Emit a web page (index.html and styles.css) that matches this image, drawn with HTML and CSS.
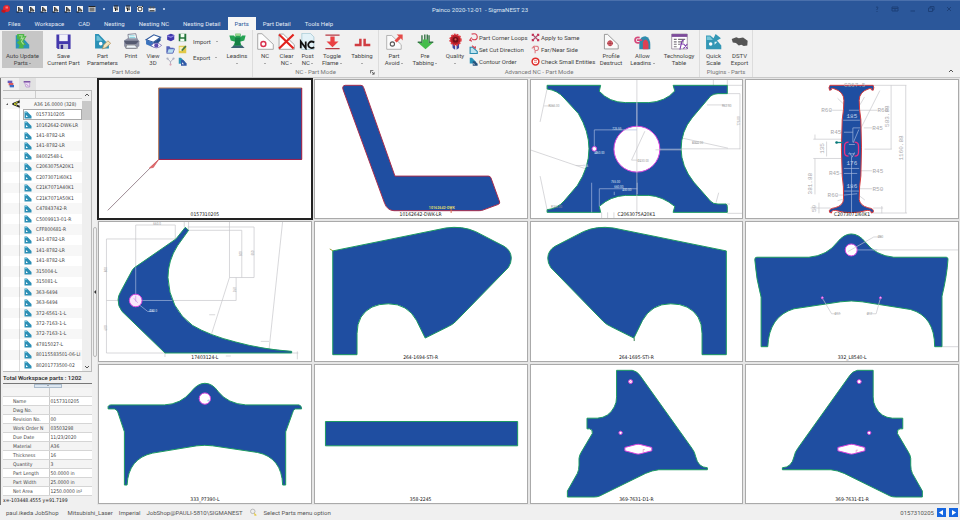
FILE: index.html
```html
<!DOCTYPE html>
<html lang="en">
<head>
<meta charset="utf-8">
<title>Painco 2020-12-01 - SigmaNEST 23</title>
<link rel="stylesheet" href="styles.css">
</head>
<body>
<svg class="defs" aria-hidden="true">
  <symbol id="part" viewBox="0 0 16 16"><path d="M1 1h5l9 9v5H1z" fill="#2c8fb5"/><path d="M4 8l4 4H4z" fill="#fff"/><path d="M2 2h3l2 2H2z" fill="#6cc3dc"/></symbol>
  <symbol id="q-part" viewBox="0 0 16 16"><path d="M2 2h12v12H2z" fill="#f3f3f3"/><path d="M5 4l7 7-3 0 2 4M5 4v8l3-2" fill="#555" stroke="#222" stroke-width="1.5"/><path d="M1 14h6" stroke="#111" stroke-width="2"/></symbol>
  <symbol id="q-doc" viewBox="0 0 16 16"><path d="M2 3h12v11H2z" fill="#f3f3f3"/><path d="M4 6h8M7 6v6M4 2l8 0" stroke="#222" stroke-width="2"/><circle cx="10" cy="9" r="2" fill="#555"/></symbol>
</svg>

<header class="titlebar">
  <div class="quick">
    <svg class="logo" viewBox="0 0 20 20"><circle cx="11" cy="9" r="7" fill="#e3262e"/><path d="M1 11l9 2-3 5-6-2z" fill="#c3151d"/><path d="M9 5h5v4H9z" fill="#ff7377"/></svg>
    <button aria-label="New part"><svg viewBox="0 0 16 16"><use href="#q-part"/></svg></button>
    <button aria-label="Edit part"><svg viewBox="0 0 16 16"><use href="#q-part"/></svg></button>
    <button aria-label="Copy part"><svg viewBox="0 0 16 16"><use href="#q-part"/></svg></button>
    <button aria-label="Load part"><svg viewBox="0 0 16 16"><use href="#q-part"/></svg></button>
    <button aria-label="Open part"><svg viewBox="0 0 16 16"><use href="#q-part"/></svg></button>
    <button aria-label="Find part"><svg viewBox="0 0 16 16"><use href="#q-part"/></svg></button>
    <button aria-label="Sheet"><svg viewBox="0 0 16 16"><path d="M1 3h14v11H1z" fill="#ddd"/><path d="M3 5h10v8H3z" fill="#777"/><path d="M1 3h14" stroke="#222" stroke-width="2"/></svg></button>
    <button class="dot" aria-label="Sheet options"></button>
    <button aria-label="Task"><svg viewBox="0 0 16 16"><use href="#q-doc"/></svg></button>
    <button aria-label="Nest"><svg viewBox="0 0 16 16"><use href="#q-doc"/></svg></button>
    <button aria-label="Settings"><svg viewBox="0 0 16 16"><path d="M2 2h12v12H2z" fill="#f3f3f3"/><circle cx="8" cy="8" r="4" fill="none" stroke="#333" stroke-width="2"/><path d="M2 2l3 2M14 2l-3 2" stroke="#111" stroke-width="2"/></svg></button>
    <button aria-label="Print"><svg viewBox="0 0 16 16"><path d="M1 6h14v7H1z" fill="#eee"/><path d="M3 3h4v4H3zM9 3h4v4H9zM3 10h10v3H3z" fill="#555"/></svg></button>
    <button class="dot" aria-label="Customize toolbar"></button>
  </div>
  <h1>Painco 2020-12-01&nbsp; - SigmaNEST 23</h1>
  <div class="window-controls">
    <button aria-label="Help"><svg viewBox="0 0 16 16"><path d="M6 5q2-3 4 0q0 2-2 3v2M8 12v2"/></svg></button>
    <button aria-label="Ribbon options"><svg viewBox="0 0 16 16"><path d="M2 4h12v8H2zM2 7h12M8 8v4"/></svg></button>
    <button aria-label="Minimize"><svg viewBox="0 0 16 16"><path d="M3 12h9"/></svg></button>
    <button aria-label="Restore"><svg viewBox="0 0 16 16"><path d="M3 6h8v7H3zM6 6V3h8v7h-3"/></svg></button>
    <button aria-label="Close"><svg viewBox="0 0 16 16"><path d="M4 4l8 8M12 4l-8 8"/></svg></button>
  </div>
</header>

<nav class="tabs">
  <a href="#">Files</a><a href="#">Workspace</a><a href="#">CAD</a><a href="#">Nesting</a><a href="#">Nesting NC</a><a href="#">Nesting Detail</a><a href="#" class="active">Parts</a><a href="#">Part Detail</a><a href="#">Tools Help</a>
</nav>

<div class="ribbon">
  <section class="group g-part">
    <div class="tools">
      <button class="big pressed"><svg viewBox="0 0 48 48"><path d="M5 6h13l25 27v11H5z" fill="#2c93b8"/><path d="M9 3h20v6l7-1-10 16 8 10h-7v9H12l4-8-8-8 8-7-8-3z" fill="#4eb548"/><path d="M14 8h9l-3 8 7-2-6 10 6 8" fill="none" stroke="#a8dd9a" stroke-width="3"/></svg><span>Auto Update<br>Parts <i class="caret"></i></span></button>
      <button class="big"><svg viewBox="0 0 48 48"><path d="M4 4h40v41H8l-4-4z" fill="#4438ad"/><path d="M12 4h24v19H12z" fill="#f2f2fa"/><path d="M12 31h25v14H12z" fill="#c9c9dc"/><path d="M16 33h7v12h-7z" fill="#342a8c"/></svg><span>Save<br>Current Part</span></button>
      <button class="big"><svg viewBox="0 0 48 48"><path d="M3 3h10l29 30v11H3z" fill="#2b91b6"/><path d="M7 8h5l13 14H7z" fill="#6dc1d8"/><circle cx="19" cy="30" r="5" fill="#fff"/><path d="M24 45l3-11 12-12 8 7-13 12z" fill="#f3e5bf" stroke="#ad8b54" stroke-width="2"/></svg><span>Part<br>Parameters</span></button>
      <button class="big"><svg viewBox="0 0 48 48"><path d="M14 4l22-2 4 18H16z" fill="#fff" stroke="#555b73" stroke-width="2"/><path d="M3 21l10-6h27l6 8v14l-10 8H9l-6-8z" fill="#8f93a6"/><path d="M3 22h42l-8 9H8z" fill="#555a70"/><path d="M10 34h24l7 9H8z" fill="#eef4fa" stroke="#777" stroke-width="2"/><path d="M18 8h15M18 13h17" stroke="#55c0d0" stroke-width="2"/></svg><span>Print</span></button>
      <button class="big"><svg viewBox="0 0 48 48"><path d="M3 19L25 5l19 7-20 14z" fill="#fff" stroke="#315b9f" stroke-width="3"/><path d="M3 20l21 7v14L3 32z" fill="#3b73bd"/><path d="M24 27l20-14v8L26 41z" fill="#224c8c"/><path d="M17 35q14-14 30 0-15 14-30 0z" fill="#fff" stroke="#6a5dae" stroke-width="2"/><circle cx="32" cy="35" r="6" fill="#5c4bb0"/></svg><span>View<br>3D</span></button>
      <div class="mini">
        <button aria-label="Add part"><svg viewBox="0 0 24 24"><path d="M3 6l10-4 9 3v12l-9 5-10-4z" fill="#4038ad"/><path d="M3 6l10 3 9-4v3l-9 5-10-4z" fill="#8d86df"/></svg></button>
        <button aria-label="Save part"><svg viewBox="0 0 24 24"><path d="M2 2h20v20H2z" fill="#24743b"/><path d="M7 2h10v9H7zM6 15h11v7H6z" fill="#f2fff2"/></svg></button>
        <button aria-label="Open folder"><svg viewBox="0 0 24 24"><path d="M1 3h8l3 4h8v13H1z" fill="#5562ba"/><path d="M6 10h17l-5 12H2z" fill="#b7ddf0" stroke="#4a55b0" stroke-width="2"/></svg></button>
        <button aria-label="Edit list"><svg viewBox="0 0 24 24"><path d="M2 2h20v20H2z" fill="#e2c948"/><path d="M4 5h9v11H4z" fill="#faf0bc"/><path d="M10 15L21 3" stroke="#437948" stroke-width="4"/></svg></button>
        <button aria-label="Transform"><svg viewBox="0 0 24 24"><path d="M4 4l8 9 8-9M12 13v8" fill="none" stroke="#999db1" stroke-width="2"/><circle cx="4" cy="4" r="3" fill="#aeb2c4"/><circle cx="20" cy="4" r="3" fill="#aeb2c4"/><circle cx="12" cy="20" r="3" fill="#dba7b8"/></svg></button>
        <button aria-label="Part library"><svg viewBox="0 0 24 24"><path d="M2 2h6l10 10v6H2z" fill="#2a92b7"/><path d="M8 8h6l9 9v6H8z" fill="#3159a7"/><path d="M11 14l5 5h-5z" fill="#fff"/></svg></button>
      </div>
      <div class="menu-pair"><button>Import <i class="caret"></i></button><button>Export <i class="caret"></i></button></div>
      <button class="big"><svg viewBox="0 0 48 48"><path d="M1 7h13l4 5V2h15v10l4-5h10l-4 14-12 4 5 12H12l5-12-12-4z" fill="#25a354"/><path d="M17 13h15v21H17z" fill="#158045"/><path d="M5 42l8-7h24l7 7z" fill="#3d6373"/><path d="M18 2h14v6H18z" fill="#9bd68f"/></svg><span>Leadins<br><i class="caret"></i></span></button>
    </div>
    <h2>Part Mode</h2>
  </section>

  <section class="group g-nc">
    <div class="tools">
      <button class="big"><svg viewBox="0 0 48 48"><path d="M2 2h12l32 30v14H2z" fill="#fdfdfd" stroke="#888" stroke-width="2"/><circle cx="18" cy="31" r="7" fill="none" stroke="#d8304d" stroke-width="4"/></svg><span>NC<br><i class="caret"></i></span></button>
      <button class="big"><svg viewBox="0 0 48 48"><path d="M3 3h12l31 30v13H3z" fill="#fff" stroke="#888" stroke-width="2"/><path d="M3 4l41 40M44 4L3 44" stroke="#e1241f" stroke-width="6"/></svg><span>Clear<br>NC <i class="caret"></i></span></button>
      <button class="big"><svg viewBox="0 0 48 48"><path d="M8 1h24l10 10v36H8z" fill="#e3f2f8" stroke="#9dc2cf" stroke-width="2"/><path d="M5 43V24l14 19V24M43 27q-8-6-14 0t0 13q6 5 14 0" fill="none" stroke="#111" stroke-width="5"/></svg><span>Post<br>NC <i class="caret"></i></span></button>
      <button class="big"><svg viewBox="0 0 48 48"><path d="M4 6h40M4 44h40" stroke="#b63b45" stroke-width="4"/><path d="M18 10h12v14h11L24 40 7 24h11z" fill="#ea4144"/></svg><span>Toggle<br>Flame <i class="caret"></i></span></button>
      <button class="big"><svg viewBox="0 0 48 48"><path d="M2 34h16V16M46 34H30V16" fill="none" stroke="#d03d42" stroke-width="7"/></svg><span>Tabbing<br><i class="caret"></i></span></button>
    </div>
    <h2>NC - Part Mode</h2>
    <button class="launcher" aria-label="NC options"><svg viewBox="0 0 12 12"><path d="M1 8V1h7M4 4l6 6M10 5v5H5"/></svg></button>
  </section>

  <section class="group g-adv">
    <div class="tools">
      <button class="big"><svg viewBox="0 0 48 48"><path d="M2 7h14l27 26v13H2z" fill="#fbfbfb" stroke="#999" stroke-width="2"/><circle cx="18" cy="31" r="6" fill="none" stroke="#555" stroke-width="3"/><path d="M24 21L36 9l-6-5h17v17l-5-6-12 12z" fill="#e44b48"/></svg><span>Part<br>Avoid <i class="caret"></i></span></button>
      <button class="big"><svg viewBox="0 0 48 48"><path d="M2 26h12V6M46 26H34V6M22 4v18M29 4v18" stroke="#387548" stroke-width="4" fill="none"/><path d="M16 18h16v10h12L24 46 4 28h12z" fill="#45bd4b"/></svg><span>Pre<br>Tabbing <i class="caret"></i></span></button>
      <button class="big"><svg viewBox="0 0 48 48"><path d="M15 28h8v19l-7-5zM27 28h7v14l-7 5z" fill="#3e45a0"/><circle cx="24" cy="19" r="15" fill="#b71c28" stroke="#df3b42" stroke-width="5" stroke-dasharray="5 3"/><circle cx="24" cy="19" r="8" fill="#6f1019"/><circle cx="24" cy="18" r="3" fill="#e05055"/></svg><span>Quality<br><i class="caret"></i></span></button>
      <div class="stack">
        <button><svg viewBox="0 0 24 24"><path d="M7 3q14-4 15 7 0 9-10 8L8 16M7 12l-5 7 6 3" fill="none" stroke="#d63d51" stroke-width="3"/></svg>Part Corner Loops</button>
        <button><svg viewBox="0 0 24 24"><path d="M3 6h7l12 11v6H3z" fill="#bfe4ef" stroke="#2c8caf" stroke-width="3"/><path d="M8 2l8 6M17 3v7" stroke="#d94a59" stroke-width="3"/></svg>Set Cut Direction</button>
        <button><svg viewBox="0 0 24 24"><path d="M2 2h6l9 9v6H2z" fill="#2892b7"/><path d="M10 11h6l7 7v5H10z" fill="#24517b"/><path d="M12 16l4 4h-4z" fill="#fff"/></svg>Contour Order</button>
      </div>
      <div class="stack">
        <button><svg viewBox="0 0 24 24"><path d="M2 2h6v6H2zM16 2h6v6h-6zM2 16h6v6H2zM16 16h6v6h-6z" fill="#c83457"/><path d="M6 6l12 12M18 6L6 18" stroke="#b2506f" stroke-width="3"/></svg>Apply to Same</button>
        <button><svg viewBox="0 0 24 24"><path d="M5 4q16-3 15 5t-9 5v8M2 9l7-5 0 9" fill="none" stroke="#df7b83" stroke-width="3"/></svg>Far/Near Side</button>
        <button><svg viewBox="0 0 24 24"><circle cx="12" cy="12" r="9" fill="#fff" stroke="#df2e2b" stroke-width="4"/><path d="M8 9h8M8 14h8" stroke="#df5552" stroke-width="2"/></svg>Check Small Entities</button>
      </div>
      <button class="big"><svg viewBox="0 0 48 48"><path d="M4 4h9l30 29v12H4z" fill="#fafafa" stroke="#777" stroke-width="2"/><circle cx="20" cy="29" r="7" fill="#e77a84" stroke="#ba3340" stroke-width="2"/><path d="M12 29h16M20 21v16" stroke="#922a36" stroke-width="2"/></svg><span>Profile<br>Destruct</span></button>
      <button class="big"><svg viewBox="0 0 48 48"><path d="M15 46V26q2-17 17-17 14 4 14 24v13z" fill="#2d8bad"/><path d="M25 46V26q2-8 9-8 7 4 7 14v14z" fill="#dd4054"/><path d="M16 13q-13-3-13 7t13 7M8 20h15" fill="none" stroke="#d5477a" stroke-width="5"/></svg><span>Allow<br>Leadins <i class="caret"></i></span></button>
      <button class="big"><svg viewBox="0 0 48 48"><path d="M2 3h44v42H2z" fill="#fff" stroke="#86798d" stroke-width="2"/><path d="M2 3h44v8H2z" fill="#7d4c9b"/><path d="M8 18h8M20 18h20M8 25h8M20 25h16M8 32h8M20 32h6M8 39h8" stroke="#77717b" stroke-width="3"/><path d="M25 47l6-24q2-4 5-2M26 31h10M36 31l11 13M46 31L35 44" fill="none" stroke="#7c3baa" stroke-width="3"/></svg><span>Technology<br>Table</span></button>
    </div>
    <h2>Advanced NC - Part Mode</h2>
  </section>

  <section class="group g-plug">
    <div class="tools">
      <button class="big"><svg viewBox="0 0 48 48"><path d="M3 7h12l9 8 6-12 15 12-11 6 12 14v11H3z" fill="#3397b5"/><path d="M5 10h9l8 10H5z" fill="#7ac8da"/><circle cx="16" cy="31" r="5" fill="#fff"/><path d="M27 25h8l-8 8z" fill="#def4f8"/></svg><span>Quick<br>Scale</span></button>
      <button class="big"><svg viewBox="0 0 48 48"><path d="M2 17l13-5 7 3 12-2 13 9-1 13-10 2-7-4-7 2-8-7-9-1z" fill="#555"/></svg><span>DSTV<br>Export</span></button>
    </div>
    <h2>Plugins - Parts</h2>
  </section>
  <button class="collapse" aria-label="Collapse ribbon"><svg viewBox="0 0 12 12"><path d="M2 8l4-4 4 4"/></svg></button>
</div>

<main>
  <aside class="sidebar">
    <div class="pane-tabs">
      <button class="active" aria-label="Parts list"><svg viewBox="0 0 24 24"><path d="M2 2h14v7H2z" fill="#6659b9"/><path d="M5 9h14v7H5z" fill="#d85b62"/><path d="M8 15h13v7H8z" fill="#3c6cc5"/></svg></button>
      <button aria-label="Nests list"><svg viewBox="0 0 24 24"><path d="M2 3h20v5H2z" fill="#7d55a6"/><path d="M5 8h15v13H9z" fill="#eee4f6" stroke="#ad87c8" stroke-width="2"/><path d="M10 12l7 7" stroke="#a65bb5" stroke-width="2"/></svg></button>
    </div>
    <div class="tree-wrap">
      <div class="tree-head"><span></span><span></span></div>
      <ul class="tree">
        <li class="root"><i class="twist"></i><svg viewBox="0 0 24 24"><path d="M23 1v7l-12 4 12 5v6L1 14v-4z" fill="#222"/><path d="M17 6L6 12l9 4" fill="none" stroke="#d5da28" stroke-width="3"/></svg><span>A36 16.0000 (328)</span></li>
        <li class="selected"><svg><use href="#part"/></svg><span>0157310205</span></li>
        <li><svg><use href="#part"/></svg><span>10162642-DWK-LR</span></li>
        <li><svg><use href="#part"/></svg><span>141-8782-LR</span></li>
        <li><svg><use href="#part"/></svg><span>141-8782-LR</span></li>
        <li><svg><use href="#part"/></svg><span>84002548-L</span></li>
        <li><svg><use href="#part"/></svg><span>C2063075A20K1</span></li>
        <li><svg><use href="#part"/></svg><span>C2073071I60K1</span></li>
        <li><svg><use href="#part"/></svg><span>C21K7071A40K1</span></li>
        <li><svg><use href="#part"/></svg><span>C21K7071A50K1</span></li>
        <li><svg><use href="#part"/></svg><span>C47843742-R</span></li>
        <li><svg><use href="#part"/></svg><span>C5009913-01-R</span></li>
        <li><svg><use href="#part"/></svg><span>CFF800681-R</span></li>
        <li><svg><use href="#part"/></svg><span>141-8782-LR</span></li>
        <li><svg><use href="#part"/></svg><span>141-8782-LR</span></li>
        <li><svg><use href="#part"/></svg><span>141-8782-LR</span></li>
        <li><svg><use href="#part"/></svg><span>315004-L</span></li>
        <li><svg><use href="#part"/></svg><span>315081-L</span></li>
        <li><svg><use href="#part"/></svg><span>363-6494</span></li>
        <li><svg><use href="#part"/></svg><span>363-6494</span></li>
        <li><svg><use href="#part"/></svg><span>372-6561-1-L</span></li>
        <li><svg><use href="#part"/></svg><span>372-7163-1-L</span></li>
        <li><svg><use href="#part"/></svg><span>372-7163-1-L</span></li>
        <li><svg><use href="#part"/></svg><span>47815027-L</span></li>
        <li><svg><use href="#part"/></svg><span>80115583501-06-LI</span></li>
        <li><svg><use href="#part"/></svg><span>80201773500-02</span></li>
      </ul>
      <div class="scroll"><svg viewBox="0 0 12 12"><path d="M2 8l4-4 4 4"/></svg><b></b><svg viewBox="0 0 12 12"><path d="M2 4l4 4 4-4"/></svg></div>
    </div>
    <p class="total">Total Workspace parts : 1202</p>
    <div class="divider"><i class="caret"></i></div>
    <table class="props">
      <tr><th></th><td></td></tr>
      <tr><th>Name</th><td>0157310205</td></tr>
      <tr><th>Dwg No.</th><td></td></tr>
      <tr><th>Revision No.</th><td>00</td></tr>
      <tr><th>Work Order N</th><td>03503298</td></tr>
      <tr><th>Due Date</th><td>11/23/2020</td></tr>
      <tr><th>Material</th><td>A36</td></tr>
      <tr><th>Thickness</th><td>16</td></tr>
      <tr><th>Quantity</th><td>3</td></tr>
      <tr><th>Part Length</th><td>50.0000 in</td></tr>
      <tr><th>Part Width</th><td>25.0000 in</td></tr>
      <tr><th>Net Area</th><td>1250.0000 in²</td></tr>
    </table>
    <p class="coords">x=-103448.4555 y=91.7199</p>
  </aside>
  <div class="splitter"><button aria-label="Collapse pane"></button></div>

  <div class="gallery">
    <figure class="current">
      <svg viewBox="6 8 642 422">
        <path class="body orange" d="M188 35H618V250H188Z"/><path d="M618 35V250H188" fill="none" stroke="#982052" stroke-width="3"/>
        <path d="M35 403L188 250" stroke="#9c8a92" stroke-width="3"/><path d="M160 276l28-26-16 24z" fill="#e36a6a" stroke="#d35a62" stroke-width="2"/>
      </svg><figcaption>0157310205</figcaption>
    </figure>
    <figure>
      <svg viewBox="4 8 642 422">
        <path class="body red" d="M98 27H145Q151 27 153 34L247 300H528Q534 300 536 306L562 378Q563 383 558 385L512 402Q508 404 500 404H244Q224 403 216 382L91 40Q87 28 98 27Z"/>
        <text x="349" y="399" class="etch">10162642-DWK</text><path d="M416 399v12" stroke="#d96c4b" stroke-width="3"/>
      </svg><figcaption>10162642-DWK-LR</figcaption>
    </figure>
    <figure>
      <svg viewBox="3 8 642 422">
        <path class="dim" d="M54 38L33 137M45 89h30M33 300L54 401M3 221L170 278M140 268h30M596 52h38V219M535 86h70M462 186L598 216M490 202h20M457 218h178M554 8v50M596 8v18M596 27h49M570 350l-8 30M590 384h14M218 409v22M255 409v22M236 409v22M218 430h37M596 412h49"/>
        <path class="body" d="M54 27H215L211 45Q240 78 290 79H360Q410 76 438 44L433 27H596V52H568Q553 52 545 60L490 125Q457 165 457 218Q457 270 495 318L545 375Q553 384 568 384H592Q596 386 596 392V409H433L438 391Q400 360 360 358H290Q245 360 211 391L215 409H54V401Q85 398 105 375L145 328Q180 275 180 218Q180 165 148 112L105 65Q85 42 54 38Z"/>
        <circle class="hole" cx="324" cy="219" r="69"/><circle class="hole" cx="196" cy="218" r="7"/>
        <path class="dim" d="M324 8V410M308 252L348 165M308 252h18M380 221h80"/>
        <path class="dim light" d="M196 210V161H324M324 79v70M393 219h64M188 320V409M211 391V338H325M325 320v34M256 347v10M195 231h10"/>
        <g class="note light"><text x="250" y="160">725.55</text><text x="198" y="235">Ø60.00</text><text x="246" y="320">755.00</text><text x="256" y="337">660.00</text><text x="280" y="345">400.00</text><text x="162" y="272">R36</text></g>
        <g class="note"><text x="58" y="93">R265.00</text><text x="326" y="257">Ø430.00</text><text x="580" y="91">R62.50</text><text x="490" y="205">R900.00</text><text x="66" y="396">R265.00</text><text transform="translate(633 148) rotate(-90)">775.00</text></g>
      </svg><figcaption>C2063075A20K1</figcaption>
    </figure>
    <figure>
      <svg viewBox="3 8 642 422">
        <path class="dim" d="M265 102h54M281 66l38 36M347 102h54M362 62l-14 24M360 155h25M388 27h100M442 27V219M486 27V411M362 219h82M408 43L330 198M213 175v14M208 189h88M248 196v45M213 247v108M208 247h84M290 168h15M288 292h20M345 284h40M345 338h40M284 357h16M225 380v32M200 396h60M388 396h30M414 390v22M386 411h104M345 358l18 14M281 374l30-8M265 430h140"/>
        <path class="body crimson" d="M258 27H388Q392 34 388 42L382 40Q385 34 376 37Q346 46 346 72Q346 100 351 130Q355 215 351 300Q346 330 346 370Q348 388 372 395Q393 398 388 409L382 411Q384 403 370 403Q346 410 322 410Q298 410 274 403Q261 403 263 411L257 409Q252 398 274 395Q298 388 299 370Q300 330 295 300Q290 215 295 130Q300 100 300 72Q300 46 270 37Q260 34 263 40L257 42Q253 34 258 27Z"/>
        <path d="M314 198q-12 0-12 12v18q0 12 12 12M332 198q12 0 12 12v18q0 12-12 12" fill="none" stroke="#e83285" stroke-width="4"/>
        <path d="M276 199h20" stroke="#128888" stroke-width="4"/><circle cx="278" cy="199" r="4" fill="#0b7777"/>
        <path class="dim light" d="M298 132h50M300 277h46M301 345h44M323 242v168M327 198V155h22M315 205h18M313 233h20M317 229l8 14 7-14M345 160l-17 40M300 168h27M300 292h40M345 102l-30 0M300 357l40-4"/>
        <g class="dimtext"><text x="232" y="108">R60</text><text x="401" y="108">R60</text><text x="260" y="174">R45</text><text x="385" y="161">R45</text><text x="255" y="298">R45</text><text x="386" y="291">R45</text><text x="386" y="344">R50</text><text x="251" y="362">R60</text><text x="300" y="33">C367.5</text><text transform="translate(435 152) rotate(-90)">583.88</text><text transform="translate(477 253) rotate(-90)">1160.88</text><text transform="translate(239 233) rotate(-90)">135</text><text transform="translate(205 355) rotate(-90)">381.88</text><text transform="translate(216 408) rotate(-90)">50</text></g>
        <g class="dimtext light"><text x="308" y="124">185</text><text x="308" y="268">176</text><text x="308" y="336">186</text></g>
      </svg><figcaption>C2073071I60K1</figcaption>
    </figure>

    <figure>
      <svg viewBox="6 436 642 422">
        <path class="dim" d="M119 573V448H238V490M31 833V490H240M31 675H421V606M31 833H207M401 436V606H475V454H275M278 464H438V606M401 606L346 779M561 436L520 822M340 718h18M495 798h25M265 436v18M278 436v28M207 833v12M390 842h15M605 828v24M588 833h20"/>
        <path class="body" d="M268 455L278 464L245 510Q216 555 216 606Q220 700 290 750Q340 780 420 800Q500 822 588 828V833H207L78 708Q65 692 66 672Q66 662 74 648L108 585Q112 577 120 573L240 490Z"/>
        <path class="dim light" d="M119 575V655M139 675H228M122 682L155 708h20"/><circle class="hole tint" cx="119" cy="675" r="19"/><path d="M113 668l12 14M119 660v18" stroke="#c68ade" stroke-width="2"/>
        <g class="note"><text x="172" y="447">660.0</text><text transform="translate(33 590) rotate(-90)">800</text><text transform="translate(33 765) rotate(-90)">600</text><text transform="translate(438 542) rotate(-90)">500</text><text transform="translate(474 540) rotate(-90)">550</text><text transform="translate(421 650) rotate(-90)">260</text></g><text class="note light" x="160" y="711">Ø80.0</text>
      </svg><figcaption>17403124-L</figcaption>
    </figure>
    <figure>
      <svg viewBox="4 436 642 422">
        <path class="body" d="M60 526L400 457Q450 450 490 468L575 512Q596 524 597 548Q597 562 588 576L430 738Q420 748 408 753L338 788L312 735Q285 685 227 685Q170 685 145 725Q133 745 133 775V838H60Z"/><path d="M51 520l10 6" stroke="#98a13e" stroke-width="3"/>
      </svg><figcaption>264-1694-STI-R</figcaption>
    </figure>
    <figure>
      <svg viewBox="3 436 642 422">
        <path class="body" transform="translate(653) scale(-1 1)" d="M60 526L400 457Q450 450 490 468L575 512Q596 524 597 548Q597 562 588 576L430 738Q420 748 408 753L338 788L312 735Q285 685 227 685Q170 685 145 725Q133 745 133 775V838H60Z"/><path d="M316 788v9" stroke="#397f52" stroke-width="3"/>
      </svg><figcaption>264-1695-STI-R</figcaption>
    </figure>
    <figure>
      <svg viewBox="3 436 642 422">
        <path class="dim" d="M341 523H645M595 814h50"/>
        <path class="body" d="M38 545H195Q250 540 280 500Q300 475 322 475Q345 475 365 500Q395 540 450 545H608Q614 546 613 552Q610 600 595 662V814H573Q573 722 500 702L355 679Q322 674 290 679L150 700Q75 722 71 814H51V665Q36 610 32 552Q32 545 38 545Z"/>
        <circle class="hole" cx="322" cy="523" r="18"/><circle class="hole" cx="235" cy="667" r="3"/><circle class="hole" cx="410" cy="667" r="3"/>
        <path class="dim" d="M312 528L390 484h24M237 671L263 715h28M409 671L397 715h-28"/><path class="dim light" d="M341 523h60"/>
        <g class="note"><text x="402" y="487">Ø80</text><text x="272" y="718">Ø17</text><text x="369" y="718">Ø17</text></g>
      </svg><figcaption>332_L8540-L</figcaption>
    </figure>

    <figure>
      <svg viewBox="6 11 642 422">
        <path class="body" d="M36 146V139Q38 134 44 134H205Q255 132 285 95Q305 69 327 69Q350 69 368 95Q395 130 450 134H610Q618 136 618 146H598Q592 150 590 160L570 215V375H561Q558 292 485 277L350 257Q327 254 303 257L170 279Q97 295 93 375H85V215L65 155Q62 148 55 146Z"/><circle class="hole" cx="327" cy="115" r="17"/><path d="M334 122l5-3v5" fill="none" stroke="#69b7e0" stroke-width="2"/>
      </svg><figcaption>333_P7390-L</figcaption>
    </figure>
    <figure>
      <svg viewBox="652 11 642 422"><path class="body" d="M686 184H1264V257H686Z"/></svg><figcaption>358-2245</figcaption>
    </figure>
    <figure>
      <svg viewBox="3 11 642 422">
        <path class="body" d="M263 30H310Q325 33 333 45L490 265Q498 275 501 290Q508 322 536 323V329H390Q370 331 350 340L212 408Q205 411 195 411H115V393L145 340Q150 330 150 315V295Q151 285 157 276L190 220Q192 208 182 206H174V174H205Q240 172 256 140Q263 128 263 110Z"/>
        <circle class="hole" cx="305" cy="64" r="6"/><circle class="hole" cx="275" cy="218" r="5"/><path class="hole" d="M288 262L322 253Q328 252 334 253L369 262V272L334 281Q328 283 322 281L288 272Z"/><path d="M348 268h-5v8M301 67l8-6" fill="none" stroke="#e884c3" stroke-width="2"/>
      </svg><figcaption>369-7631-D1-R</figcaption>
    </figure>
    <figure>
      <svg viewBox="649 11 642 422">
        <g transform="translate(1297) scale(-1 1)"><path class="body" d="M263 30H310Q325 33 333 45L490 265Q498 275 501 290Q508 322 536 323V329H390Q370 331 350 340L212 408Q205 411 195 411H115V393L145 340Q150 330 150 315V295Q151 285 157 276L190 220Q192 208 182 206H174V174H205Q240 172 256 140Q263 128 263 110Z"/>
        <circle class="hole" cx="305" cy="64" r="6"/><circle class="hole" cx="275" cy="218" r="5"/><path class="hole" d="M288 262L322 253Q328 252 334 253L369 262V272L334 281Q328 283 322 281L288 272Z"/></g><path d="M988 270h-5v8" fill="none" stroke="#e884c3" stroke-width="2"/>
      </svg><figcaption>369-7631-E1-R</figcaption>
    </figure>
  </div>
</main>

<footer class="status">
  <span>paul.ikeda JobShop</span><span>Mitsubishi_Laser</span><span>Imperial</span><span>JobShop@PAULI-5810\SIGMANEST</span>
  <svg viewBox="0 0 24 24"><circle cx="10" cy="9" r="6" fill="#eee" stroke="#aaa" stroke-width="2"/><path d="M13 12l8 7-6 2z" fill="#e5ca49"/></svg>
  <span>Select Parts menu option</span>
  <div class="pager"><span>0157310205</span><button aria-label="Previous part"><svg viewBox="0 0 24 24"><path d="M16 5v14L5 12z"/></svg></button><button aria-label="Next part"><svg viewBox="0 0 24 24"><path d="M8 5v14l11-7z"/></svg></button></div>
</footer>
</body>
</html>
```
FILE: styles.css
```css
* { box-sizing: border-box; }
body {
  margin: 0;
  height: 100vh;
  display: flex;
  flex-direction: column;
  overflow: hidden;
  background: #f0f0f0;
  color: #444;
  font: 6px/7px Roboto, "Open Sans", sans-serif;
}
button {
  margin: 0;
  padding: 0;
  border: 0;
  background: none;
  color: inherit;
  font: inherit;
}
h1, h2, p, ul, figure { margin: 0; padding: 0; font: inherit; }
svg { display: block; }
.defs { display: none; }
.caret {
  display: inline-block;
  border: 1px solid transparent;
  border-top-color: #666;
  border-bottom: 0;
  vertical-align: middle;
}

/* Title bar */
.titlebar {
  display: grid;
  grid-template-columns: 1fr auto 1fr;
  align-items: center;
  height: 17px;
  flex: none;
  border-top: 1px solid #4a70ac;
  background: #2b579a;
  color: #dfe7f3;
}
.quick { display: flex; align-items: center; gap: 4px; padding-left: 1px; }
.quick svg { width: 8px; height: 8px; }
.quick .logo { width: 10px; height: 10px; margin-right: 1px; }
.dot { width: 2px; height: 2px; margin: 0 3px; background: #aabfdd; }
.window-controls { display: flex; justify-content: flex-end; gap: 10px; padding-right: 7px; }
.window-controls svg { width: 8px; height: 8px; fill: none; stroke: #1d4078; stroke-width: 2; }

/* Menu tabs */
.tabs {
  display: flex;
  height: 13px;
  flex: none;
  padding-left: 1px;
  background: #2b579a;
}
.tabs a { padding: 3px 7px 0; color: #e3eaf5; text-decoration: none; }
.tabs .active { background: #f6f6f6; color: #2b579a; }

/* Ribbon */
.ribbon {
  position: relative;
  display: flex;
  height: 48px;
  flex: none;
  background: #f1f1f1;
  border-bottom: 1px solid #c9c9c9;
}
.group { position: relative; border-right: 1px solid #dcdcdc; }
.tools { display: grid; height: 38px; padding-top: 1px; }
.group h2 { text-align: center; color: #777; line-height: 8px; }
.g-part .tools { padding-left: 2px; grid-template-columns: 41px 41px 37px 20px 24px 28px 29px 30px; }
.g-nc .tools { padding-left: 1px; grid-template-columns: 22px 21px 21px 28px 32px; }
.g-adv .tools { grid-template-columns: 30px 32px 28px 62px 65px 30px 33px 40px; }
.g-plug .tools { grid-template-columns: 27px 25px; }
.big {
  display: flex;
  flex-direction: column;
  align-items: center;
  justify-content: flex-start;
  text-align: center;
  white-space: nowrap;
}
.big svg { width: 17px; height: 17px; margin: 2px 0; flex: none; }
.pressed { background: #c6c6c6; }
.mini {
  display: grid;
  grid-template-columns: 9px 9px;
  gap: 3px;
  align-content: center;
  padding-left: 1px;
}
.mini svg, .stack svg { width: 9px; height: 9px; flex: none; }
.menu-pair { display: flex; flex-direction: column; justify-content: center; gap: 9px; }
.menu-pair button { display: flex; align-items: center; gap: 5px; }
.stack { display: flex; flex-direction: column; justify-content: center; gap: 3px; }
.stack button { display: flex; align-items: center; gap: 1px; white-space: nowrap; }
.launcher { position: absolute; right: 3px; bottom: 2px; }
.launcher svg { width: 5px; height: 5px; }
.collapse { position: absolute; right: 6px; bottom: 3px; }
.collapse svg { width: 6px; height: 6px; }
.launcher svg, .collapse svg, .scroll svg { fill: none; stroke: #555; stroke-width: 2; }

/* Work area */
main { display: flex; flex: 1; min-height: 0; }
.sidebar {
  display: flex;
  flex-direction: column;
  width: 92px;
  flex: none;
  padding-left: 2px;
  border-left: 1px solid #777;
  white-space: nowrap;
}
.pane-tabs { display: flex; height: 12px; flex: none; }
.pane-tabs button { width: 16px; padding: 2px 4px; }
.pane-tabs button + button { width: 17px; background: #e2e2e2; }
.pane-tabs svg { width: 8px; height: 8px; }
.tree-wrap {
  display: grid;
  grid-template: 8px minmax(0, 1fr) / minmax(0, 1fr) 9px;
  flex: 1;
  min-height: 0;
  border: 1px solid #bbb;
  border-left: 0;
  background: #fff;
}
.tree-head { display: grid; grid-template-columns: 32px 1fr; background: #f1f1f1; border-bottom: 1px solid #ccc; }
.tree-head span + span { border-left: 1px solid #ccc; }
.tree, .props, .coords, figcaption { font: 5px/7px "DejaVu Sans Condensed", "DejaVu Sans", "Open Sans", sans-serif; }
.tree {
  grid-row: 2;
  display: grid;
  grid-auto-rows: minmax(0, 1fr);
  list-style: none;
  background: linear-gradient(#ddd, #ddd) 16px 0 / 1px 100% no-repeat;
}
.tree li { display: flex; align-items: center; padding-left: 21px; }
.tree li:nth-child(odd) { background: rgba(0, 0, 0, .03); }
.tree svg { width: 8px; height: 8px; margin-right: 4px; flex: none; }
.tree .root { padding-left: 3px; }
.tree .root svg { margin: 0 14px 0 4px; }
.tree .selected { margin-left: 20px; padding-left: 0; background: #fff; border: 1px solid #aaa; }
.twist { border: 1px solid transparent; border-right-color: #555; border-bottom-color: #555; }
.scroll {
  grid-area: 1 / 2 / 3 / 3;
  display: flex;
  flex-direction: column;
  align-items: center;
  padding: 1px 0;
  background: #efefef;
}
.scroll svg { width: 6px; height: 6px; }
.scroll b { width: 9px; height: 19px; margin: 3px 0 auto; background: #c8c8c8; }
.total {
  height: 12px;
  flex: none;
  padding-top: 2px;
  border-bottom: 1px solid #777;
  color: #222;
  font-weight: 500;
}
.divider { height: 4px; width: 28px; flex: none; align-self: center; border: 1px solid #abc; background: #dce6f0; text-align: center; line-height: 1px; }
.props { width: 100%; border-collapse: collapse; table-layout: fixed; background: #fff; }
.props tr { height: 9px; }
.props tr:nth-child(odd) { background: #f4f4f4; }
.props th, .props td { padding: 0; border-bottom: 1px solid #d5d5d5; font-weight: 400; text-align: left; }
.props th { width: 46px; padding-left: 10px; border-right: 1px solid #ccc; }
.props td { padding-left: 1px; }
.coords { height: 9px; flex: none; padding-top: 1px; color: #111; }
.splitter { display: flex; align-items: flex-end; width: 5px; flex: none; padding: 0 0 148px 1px; }
.splitter button { width: 4px; height: 130px; border: 1px solid #bbb; border-radius: 2px; }
.splitter button::before { content: ""; display: block; border: 2px solid transparent; border-right-color: #333; border-left: 0; }

/* Part drawings */
.gallery {
  flex: 1;
  min-width: 0;
  display: grid;
  grid-template: repeat(3, minmax(0, 1fr)) / repeat(4, minmax(0, 1fr));
  gap: 2px;
  padding: 1px;
  background: #e6e6e6;
}
figure { position: relative; overflow: hidden; background: #fff; outline: 1px solid #aaa; outline-offset: -1px; }
.current { outline: 2px solid #222; outline-offset: -1px; }
figure svg { width: 100%; height: 100%; }
figcaption { position: absolute; inset: auto 0 1px; text-align: center; color: #111; }
.body { fill: #1f4ea1; stroke: #1c9b60; stroke-width: 3; }
.orange { stroke: #bd7b55; }
.red { stroke: #a92d4c; }
.crimson { stroke: #d53b3e; }
.hole { fill: #fff; stroke: #d944dc; stroke-width: 3; }
.tint { fill: #f8e8fb; }
.dim { fill: none; stroke: #c4c4c8; stroke-width: 2; }
.dim.light { stroke: #a9bbdf; }
.note { font-size: 9px; fill: #999; }
.note.light { fill: #dfe7f5; }
.dimtext { font: 18px "Liberation Mono", monospace; fill: #a8a8ac; }
.dimtext.light { fill: #c5d2ea; }
.etch { font-size: 11px; font-weight: 700; fill: #dcd870; }

/* Status bar */
.status {
  display: flex;
  align-items: center;
  height: 15px;
  flex: none;
  padding: 0 2px 1px 6px;
  gap: 6px;
  color: #555;
}
.status > span:first-child { margin-right: 3px; }
.status svg { width: 9px; height: 9px; }
.pager { display: flex; align-items: center; gap: 3px; margin-left: auto; }
.pager button { background: #1666e0; }
.pager svg { width: 9px; height: 9px; fill: #fff; }
```
